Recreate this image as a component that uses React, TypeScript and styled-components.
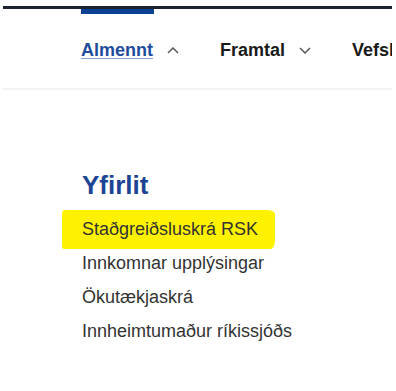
import React from "react";
import styled, { createGlobalStyle } from "styled-components";

const GlobalStyle = createGlobalStyle`
  body {
    margin: 0;
    background: #ffffff;
    font-family: "Liberation Sans", Arial, sans-serif;
  }
`;

type NavEntry = {
  label: string;
  active?: boolean;
  open?: boolean;
};

const navItems: NavEntry[] = [
  { label: "Almennt", active: true, open: true },
  { label: "Framtal" },
  { label: "Vefskil" }
];

const links = [
  "Staðgreiðsluskrá RSK",
  "Innkomnar upplýsingar",
  "Ökutækjaskrá",
  "Innheimtumaður ríkissjóðs"
];

const Caret = ({ up }: { up?: boolean }) => (
  <svg width="12" height="7" viewBox="0 0 12 7">
    <path
      d={up ? "M1 6 L6 1 L11 6" : "M1 1 L6 6 L11 1"}
      fill="none"
      stroke="#5a5a5a"
      strokeWidth="1.5"
    />
  </svg>
);

export default function App() {
  return (
    <>
      <GlobalStyle />
      <Page>
        <Header>
          <Nav>
            {navItems.map((item) => (
              <NavItem key={item.label} $active={item.active}>
                <NavLabel $active={item.active}>{item.label}</NavLabel>
                {item.label !== "Vefskil" && <Caret up={item.open} />}
              </NavItem>
            ))}
          </Nav>
        </Header>
        <Section>
          <Heading>Yfirlit</Heading>
          <List>
            {links.map((link, i) => (
              <Item key={link}>
                <ItemText $marked={i === 0}>{link}</ItemText>
              </Item>
            ))}
          </List>
        </Section>
      </Page>
    </>
  );
}

const Page = styled.div`
  width: 389px;
  padding: 6px 0 0 3px;
`;

const Header = styled.header`
  border-top: 3px solid #1c2230;
  border-bottom: 2px solid #f4f4f4;
`;

const Nav = styled.nav`
  display: flex;
  align-items: center;
  gap: 41px;
  padding: 31px 0 27px 78px;
  overflow: hidden;
  white-space: nowrap;
`;

const NavItem = styled.div<{ $active?: boolean }>`
  position: relative;
  display: flex;
  align-items: center;
  gap: 14px;
  flex-shrink: 0;

  &::before {
    content: "";
    display: ${(p) => (p.$active ? "block" : "none")};
    position: absolute;
    top: -31px;
    left: 0;
    width: 73px;
    height: 5px;
    background: #0b4296;
  }
`;

const NavLabel = styled.span<{ $active?: boolean }>`
  font-size: 18px;
  line-height: 21px;
  font-weight: 700;
  color: ${(p) => (p.$active ? "#1f4d9c" : "#1a1a1a")};
  text-decoration: ${(p) => (p.$active ? "underline" : "none")};
  text-decoration-color: #8aa3cf;
  text-underline-offset: 2px;
`;

const Section = styled.section`
  padding: 80px 0 0 79px;
`;

const Heading = styled.h2`
  margin: 0 0 12px;
  font-size: 26px;
  line-height: 30px;
  font-weight: 700;
  color: #1d4494;
`;

const List = styled.ul`
  list-style: none;
  margin: 0;
  padding: 0;
`;

const Item = styled.li`
  font-size: 18px;
  line-height: 34px;
  color: #333333;
`;

const ItemText = styled.span<{ $marked?: boolean }>`
  position: relative;
  z-index: 0;

  &::before {
    content: "";
    display: ${(p) => (p.$marked ? "block" : "none")};
    position: absolute;
    z-index: -1;
    top: -9px;
    bottom: -10px;
    left: -20px;
    right: -17px;
    background: #fff200;
    border-radius: 3px 8px 5px 2px / 4px 4px 8px 3px;
  }
`;
